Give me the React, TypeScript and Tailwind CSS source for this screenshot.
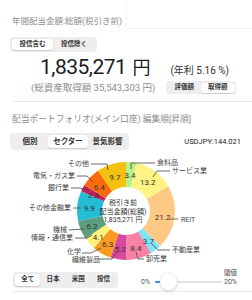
import React from 'react';

const FONT = "Roboto, 'Noto Sans CJK JP', sans-serif";
const CX = 126;
const CY = 211;
const RO = 49;
const RI = 24;

const segs = [
  { v: 3.4, c: '#b9f18c' },
  { v: 13.2, c: '#fff384' },
  { v: 21.2, c: '#ffc985' },
  { v: 3.7, c: '#7fe3f7' },
  { v: 8.4, c: '#f783a4' },
  { v: 5.2, c: '#d9489c' },
  { v: 6.3, c: '#fd9a22' },
  { v: 4.1, c: '#fff27c' },
  { v: 6.2, c: '#5e9e80' },
  { v: 9.9, c: '#25bcd6' },
  { v: 2.3, c: '#c8215c' },
  { v: 6.4, c: '#fc6a0c' },
  { v: 9.7, c: '#f4c10f' },
];

const names: { t: string; x: number; y: number; a: 'start' | 'end'; l: string }[] = [
  { t: 'その他', x: 89, y: 164, a: 'end', l: '91,164 107,164 108,170' },
  { t: '電気・ガス業', x: 75, y: 176, a: 'end', l: '77,176 87,176 93,182' },
  { t: '銀行業', x: 69, y: 188, a: 'end', l: '71,188 80,188 89,191' },
  { t: 'その他金融業', x: 71, y: 208, a: 'end', l: '73,208 81,208' },
  { t: '機械', x: 67, y: 230, a: 'end', l: '69,230 84,229' },
  { t: '情報・通信業', x: 73, y: 238, a: 'end', l: '75,238 87,238 92,235' },
  { t: '化学', x: 81, y: 252.3, a: 'end', l: '82,253 91,253 101,248' },
  { t: '繊維製品', x: 72, y: 260.2, a: 'start', l: '98,259 112,259 117,252' },
  { t: '卸売業', x: 146, y: 259, a: 'start', l: '136,252 138,259 144,259' },
  { t: '不動産業', x: 172, y: 250, a: 'start', l: '152,244 158,250 170,250' },
  { t: 'REIT', x: 181, y: 219.5, a: 'start', l: '170,219 178,219' },
  { t: 'サービス業', x: 172, y: 171, a: 'start', l: '153,177 157,171 170,171' },
  { t: '食料品', x: 157, y: 163, a: 'start', l: '131,169 131,163 155,163' },
];

function pt(r: number, a: number): [number, number] {
  const rad = (a * Math.PI) / 180;
  return [CX + r * Math.sin(rad), CY - r * Math.cos(rad)];
}

function arcPath(a0: number, a1: number) {
  const [x0, y0] = pt(RO, a0);
  const [x1, y1] = pt(RO, a1);
  const [x2, y2] = pt(RI, a1);
  const [x3, y3] = pt(RI, a0);
  const large = a1 - a0 > 180 ? 1 : 0;
  return `M${x0} ${y0} A${RO} ${RO} 0 ${large} 1 ${x1} ${y1} L${x2} ${y2} A${RI} ${RI} 0 ${large} 0 ${x3} ${y3} Z`;
}

function Donut() {
  let acc = 0;
  const parts = segs.map((s) => {
    const a0 = (acc / 100) * 360;
    acc += s.v;
    const a1 = (acc / 100) * 360;
    const [lx, ly] = pt(37, (a0 + a1) / 2);
    return { ...s, d: arcPath(a0, a1), lx, ly };
  });
  return (
    <svg width={252} height={116} viewBox="0 150 252 116" style={{ fontFamily: FONT }}>
      {parts.map((p, i) => (
        <path key={i} d={p.d} fill={p.c} />
      ))}
      {parts.map((p, i) => (
        <text key={'v' + i} x={p.lx} y={p.ly + 1.5} fontSize={8} fill="#333" textAnchor="middle" dominantBaseline="central">
          {p.v.toFixed(1)}
        </text>
      ))}
      {names.map((n, i) => (
        <g key={'n' + i}>
          <polyline points={n.l} fill="none" stroke="#444" strokeWidth={0.8} />
          <text x={n.x} y={n.y} fontSize={7} fill="#444" textAnchor={n.a} dominantBaseline="central">
            {n.t}
          </text>
        </g>
      ))}
      <text x={123} y={202.5} fontSize={7} fill="#333" textAnchor="middle" dominantBaseline="central">税引き前</text>
      <text x={123} y={211.5} fontSize={7} fill="#333" textAnchor="middle" dominantBaseline="central">配当金額(総額)</text>
      <text x={123} y={220} fontSize={7} fill="#333" textAnchor="middle" dominantBaseline="central">1,835,271 円</text>
    </svg>
  );
}

export default function App() {
  return (
    <div className="h-[300px] w-[252px] overflow-hidden bg-white" style={{ fontFamily: FONT }}>
      <div className="flex h-[29px]">
        <div className="w-[126px] whitespace-nowrap pl-[12px] pt-[16px] text-[8.5px] leading-[11px] text-[#8e8e8e]">
          年間配当金額:総額(税引き前)
        </div>
        <div className="flex-1 border-b border-l border-[#f3f3f3]" />
      </div>

      <div className="ml-[10px] mt-[8px] flex h-[15px] w-[87px] rounded-[4px] bg-[#eeeeef] p-[2px]">
        <div className="flex w-[41px] items-center justify-center rounded-[3px] bg-white text-[6.5px] font-semibold text-[#333] shadow-[0_0.5px_1px_rgba(0,0,0,0.15)]">
          投信含む
        </div>
        <div className="flex flex-1 items-center justify-center text-[6.5px] font-semibold text-[#333]">投信除く</div>
      </div>

      <div className="mt-[2.5px] h-[24px] whitespace-nowrap pl-[40px] text-[21px] leading-[24px] text-[#1c1c1e]">
        <span className="tracking-[-0.5px]">1,835,271</span>
        <span className="ml-[6px] text-[18px] leading-[10px]">円</span>
        <span className="ml-[20px] text-[10px] leading-[10px] text-[#333]">(年利 5.16 %)</span>
      </div>

      <div className="mt-[2px] flex h-[14px] items-center">
        <div className="whitespace-nowrap pl-[31px] text-[9.5px] leading-[12px] text-[#8e8e8e]">(総資産取得額 35,543,303 円)</div>
        <div className="ml-auto mr-[16px] flex h-[13px] w-[70px] rounded-[3px] bg-[#eeeeef] p-[1.5px]">
          <div className="flex flex-1 items-center justify-center text-[6.5px] font-semibold text-[#333]">評価額</div>
          <div className="flex flex-1 items-center justify-center rounded-[2.5px] bg-white text-[6.5px] font-semibold text-[#333] shadow-[0_0.5px_1px_rgba(0,0,0,0.15)]">
            取得額
          </div>
        </div>
      </div>

      <div className="ml-[13px] mt-[6px] border-t border-[#e6e6e6]" />

      <div className="mt-[12.5px] whitespace-nowrap pl-[12px] text-[8.75px] leading-[11px] text-[#8e8e8e]">
        配当ポートフォリオ(メイン口座):編集順[昇順]
      </div>

      <div className="mt-[8px] flex h-[17px] items-center">
        <div className="ml-[10px] flex h-[17px] w-[119px] rounded-[4px] bg-[#eeeeef] p-[2px]">
          <div className="flex w-[36px] items-center justify-center text-[7.5px] font-semibold text-[#333]">個別</div>
          <div className="flex w-[40px] items-center justify-center rounded-[3px] bg-white text-[7.5px] font-semibold text-[#333] shadow-[0_0.5px_1px_rgba(0,0,0,0.15)]">
            セクター
          </div>
          <div className="flex flex-1 items-center justify-center text-[7.5px] font-semibold text-[#333]">景気影響</div>
        </div>
        <div className="ml-auto mr-[11px] text-[7.5px] leading-[10px] text-[#222]">USDJPY:144.021</div>
      </div>

      <Donut />

      <div className="ml-[13px] flex h-[26px] border-b border-[#ececec]">
        <div className="mt-[6px] flex h-[16px] w-[105px] rounded-[4px] bg-[#eeeeef] p-[2px]">
          <div className="flex flex-1 items-center justify-center rounded-[3px] bg-white text-[6.5px] font-semibold text-[#333] shadow-[0_0.5px_1px_rgba(0,0,0,0.15)]">
            全て
          </div>
          <div className="flex flex-1 items-center justify-center text-[6.5px] font-semibold text-[#333]">日本</div>
          <div className="flex flex-1 items-center justify-center text-[6.5px] font-semibold text-[#333]">米国</div>
          <div className="flex flex-1 items-center justify-center text-[6.5px] font-semibold text-[#333]">投信</div>
        </div>
        <div className="ml-[23px] mt-[4px] flex flex-col">
          <div className="h-[7px] text-right text-[6.5px] leading-[7px] text-[#444]">閾値</div>
          <div className="flex h-[10px] items-center">
            <div className="w-[12px] text-[7px] leading-[8px] text-[#555]">0%</div>
            <div className="relative ml-[2px] h-[2px] w-[68px] rounded-full bg-[#e3e3e3]">
              <div className="absolute left-0 top-0 h-[2px] w-[6px] rounded-full bg-[#3a8ef5]" />
              <div className="absolute left-[4.5px] top-1/2 h-[17px] w-[17px] -translate-y-1/2 rounded-full bg-white shadow-[0_1px_3px_rgba(0,0,0,0.2),0_0_0.5px_rgba(0,0,0,0.2)]" />
            </div>
            <div className="ml-[1px] text-[7px] leading-[8px] text-[#555]">20%</div>
          </div>
        </div>
      </div>
    </div>
  );
}
